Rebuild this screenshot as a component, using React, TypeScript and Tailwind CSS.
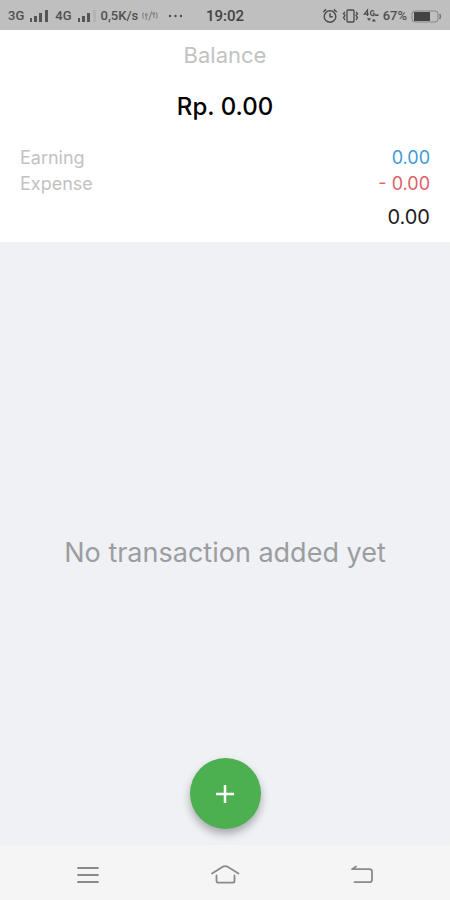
import type { ReactNode } from "react";

type RowProps = {
  label: string;
  value: string;
  valueClass: string;
};

const SignalIcon = ({ weak = false }: { weak?: boolean }) => (
  <svg width="19" height="14" viewBox="0 0 19 14" fill="#555" aria-hidden="true">
    <rect x="0" y="9" width="2" height="4" />
    <rect x="4" y="7" width="3" height="6" />
    <rect x="9" y="4" width="3" height="9" />
    <rect x="15" y="1" width="3" height="12" fill={weak ? "#b4b4b4" : "#555"} />
  </svg>
);

const HotspotIcon = () => (
  <svg width="16" height="14" viewBox="0 0 16 14" fill="none" stroke="#8a8a8a" strokeWidth="1.3" aria-hidden="true">
    <path d="M1.5 3.5q-1.5 3 0 6M4.3 6v5M6.8 11.5L9.8 2.5M11.8 4v5M14.3 3.5q1.5 3 0 6" />
    <circle cx="4.3" cy="5.5" r="0.9" />
    <circle cx="11.8" cy="4.5" r="0.9" />
  </svg>
);

const AlarmIcon = () => (
  <svg width="16" height="16" viewBox="0 0 16 16" fill="none" stroke="#4b4b4b" strokeWidth="1.4" aria-hidden="true">
    <circle cx="8" cy="8.5" r="5.8" />
    <path d="M8 5.2v3.6h2.8M1.2 4l3-2.6M14.8 4l-3-2.6" />
  </svg>
);

const VibrateIcon = () => (
  <svg width="17" height="16" viewBox="0 0 17 16" fill="none" stroke="#4b4b4b" strokeWidth="1.3" aria-hidden="true">
    <rect x="5" y="2" width="7" height="12" rx="1" />
    <path d="M3 4L1.5 5.5 3 7.5 1.5 9.5 3 12M14 4l1.5 1.5L14 7.5l1.5 2L14 12" />
  </svg>
);

const DataIcon = () => (
  <svg width="16" height="16" viewBox="0 0 16 16" fill="none" stroke="#4b4b4b" strokeWidth="1.2" aria-hidden="true">
    <path d="M4.5 8V2L1.3 6.2h4.5M11 3.3C9.5 1.6 7.5 3 7.5 5s2 3.6 3.6 2V5.3H9.8M12.8 6v1.5h2V6" />
    <path d="M4.5 10.5h3L6 12.6zM9.3 13.2h3l-1.5-2.1z" fill="#4b4b4b" strokeWidth="0.6" />
  </svg>
);

const BatteryIcon = () => (
  <svg width="31" height="13" viewBox="0 0 31 13" fill="none" aria-hidden="true">
    <rect x="1" y="1" width="26" height="11" rx="3" stroke="#858585" />
    <rect x="3" y="2" width="16" height="9" fill="#444" />
    <path d="M28.5 4q2 2.5 0 5" stroke="#777" strokeWidth="1.5" />
  </svg>
);

const StatusBar = () => (
  <div className="flex h-[30px] items-center bg-[#bfbfbf] px-2 pt-0.5 font-[Roboto,sans-serif] text-[13px] font-medium text-[#505050]">
    <div className="flex flex-1 items-center">
      <span className="mr-1.5">3G</span>
      <SignalIcon />
      <span className="ml-1.5 mr-1.5">4G</span>
      <SignalIcon weak />
      <span className="ml-1 mr-1">0,5K/s</span>
      <HotspotIcon />
      <svg className="ml-2.5" width="15" height="4" viewBox="0 0 15 4" fill="#4b4b4b" aria-hidden="true">
        <circle cx="2" cy="2" r="1.2" />
        <circle cx="7.5" cy="2" r="1.2" />
        <circle cx="13" cy="2" r="1.2" />
      </svg>
    </div>
    <time className="text-[15px] text-[#444]">19:02</time>
    <div className="flex flex-1 items-center justify-end gap-1">
      <AlarmIcon />
      <VibrateIcon />
      <DataIcon />
      <span>67%</span>
      <BatteryIcon />
    </div>
  </div>
);

const SummaryRow = ({ label, value, valueClass }: RowProps) => (
  <div className="flex items-baseline justify-between leading-[26px]">
    <dt className="text-[#c2c2c2]">{label}</dt>
    <dd className={valueClass}>{value}</dd>
  </div>
);

const NavButton = ({ label, children }: { label: string; children: ReactNode }) => (
  <button type="button" aria-label={label} className="flex h-10 w-12 items-center justify-center">
    <svg width="30" height="24" viewBox="0 0 30 24" fill="none" stroke="#8a8a8a" strokeWidth="1.8" strokeLinecap="round" strokeLinejoin="round">
      {children}
    </svg>
  </button>
);

export default function App() {
  return (
    <div className="flex min-h-screen flex-col bg-[#eff1f5] font-[Inter,sans-serif]">
      <StatusBar />

      <header className="bg-white px-5 pb-[9px] pt-[11px]">
        <h1 className="text-center text-[22px] leading-7 text-[#c2c2c2]">Balance</h1>
        <p className="mt-5 text-center text-[24px] font-medium leading-9 text-black">Rp. 0.00</p>
        <dl className="mt-5 text-[18px]">
          <SummaryRow label="Earning" value="0.00" valueClass="text-[#3c9bd6]" />
          <SummaryRow label="Expense" value="- 0.00" valueClass="text-[#e06068]" />
        </dl>
        <p className="mt-1 text-right text-[20px] leading-8 text-[#1c1c1c]">0.00</p>
      </header>

      <main className="relative flex flex-1 items-center justify-center pt-5">
        <p className="text-[27px] text-[#9c9da0]">No transaction added yet</p>

        {/* Floating add button */}
        <div className="absolute inset-x-0 bottom-4 flex justify-center">
          <button
            type="button"
            aria-label="Add transaction"
            className="flex size-[71px] items-center justify-center rounded-full bg-[#4caf50] shadow-[0_5px_8px_rgba(0,0,0,0.3)]"
          >
            <svg width="18" height="18" viewBox="0 0 18 18" stroke="#fff" strokeWidth="2.5" aria-hidden="true">
              <path d="M9 0v18M0 9h18" />
            </svg>
          </button>
        </div>
      </main>

      <nav className="flex h-[55px] items-center justify-between bg-[#f5f5f5] px-16 pt-1">
        <NavButton label="Recent apps">
          <path d="M5 5h20M5 12h20M5 19h20" />
        </NavButton>
        <NavButton label="Home">
          <path d="M2 10.5L13.2 3.6q2-1 4 0L28.5 10.5M6.5 12.5v5.2q0 2 2 2h14q2 0 2-2v-5.2" />
        </NavButton>
        <NavButton label="Back">
          <path d="M9 3.5L5 6.2h17.5q2.5 0 2.5 2.5v8q0 2.5-2.5 2.5H7.5" />
        </NavButton>
      </nav>
    </div>
  );
}
